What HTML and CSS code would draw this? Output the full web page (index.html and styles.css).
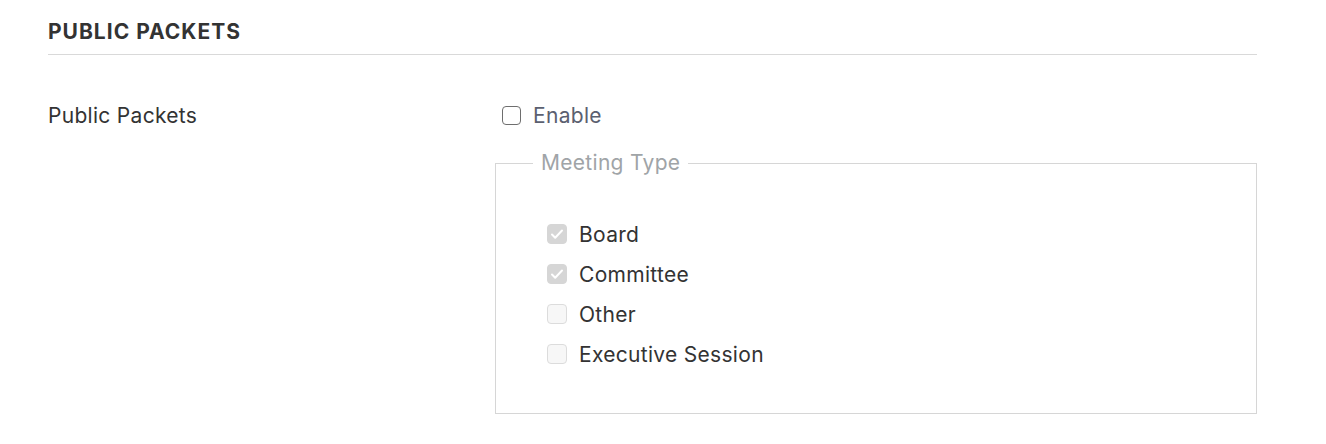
FILE: index.html
```html
<!DOCTYPE html>
<html lang="en">
<head>
    <meta charset="UTF-8">
    <meta name="viewport" content="width=device-width, initial-scale=1.0">
    <title>Public Packets</title>
    <link rel="stylesheet" href="styles.css">
</head>
<body>

<div class="container">
    <h2 class="section-title">PUBLIC PACKETS</h2>

    <div class="setting-row">
        <div class="setting-label">Public Packets</div>
        <div class="setting-control">
            <label class="check enable">
                <input type="checkbox" id="enablePackets">
                <span>Enable</span>
            </label>

            <fieldset class="meeting-types" disabled>
                <legend>Meeting Type</legend>
                <label class="check">
                    <input type="checkbox" checked>
                    <span>Board</span>
                </label>
                <label class="check">
                    <input type="checkbox" checked>
                    <span>Committee</span>
                </label>
                <label class="check">
                    <input type="checkbox">
                    <span>Other</span>
                </label>
                <label class="check">
                    <input type="checkbox">
                    <span>Executive Session</span>
                </label>
            </fieldset>
        </div>
    </div>
</div>

</body>
</html>
```

FILE: styles.css
```css
body {
    margin: 0;
    font-family: Inter, "Noto Sans", Arial, sans-serif;
    font-size: 21px;
    letter-spacing: 0.3px;
    color: #333;
    background: #fff;
}
.container {
    width: 1209px;
    margin-left: 48px;
}
.section-title {
    margin: 20px 0 0;
    padding-bottom: 10px;
    font-size: 21px;
    line-height: 24px;
    font-weight: 700;
    letter-spacing: 1px;
    color: #333;
    border-bottom: 1px solid #d9d9d9;
}
.setting-row {
    display: grid;
    grid-template-columns: 447px 1fr;
    margin-top: 48px;
}
.setting-label {
    padding-top: 1px;
    line-height: 24px;
}
.check {
    display: flex;
    align-items: center;
    gap: 12px;
    height: 40px;
    color: #333;
}
.check input {
    appearance: none;
    margin: 0;
    width: 20px;
    height: 20px;
    border: 1px solid #dcdcdc;
    border-radius: 4px;
    background: #f7f7f7;
}
.check input:checked {
    background: #d6d6d6 url("data:image/svg+xml;utf8,<svg xmlns='http://www.w3.org/2000/svg' viewBox='0 0 20 20'><path d='M5 10.5l3.2 3.2L15 6.5' fill='none' stroke='white' stroke-width='2' stroke-linecap='round' stroke-linejoin='round'/></svg>") center / 20px no-repeat;
    border-color: #d6d6d6;
}
.enable {
    height: 24px;
    margin-left: 7px;
    color: #5b6070;
}
.enable input {
    width: 19px;
    height: 19px;
    border: 1.5px solid #6e6e6e;
    background: #fff;
}
.meeting-types {
    margin: 24px 0 0;
    padding: 39px 0 39px 51px;
    border: 1px solid #d6d6d6;
    min-width: 0;
}
.meeting-types legend {
    margin-left: -14px;
    padding: 0 8px;
    line-height: 24px;
    color: #a0a4a7;
}
```
